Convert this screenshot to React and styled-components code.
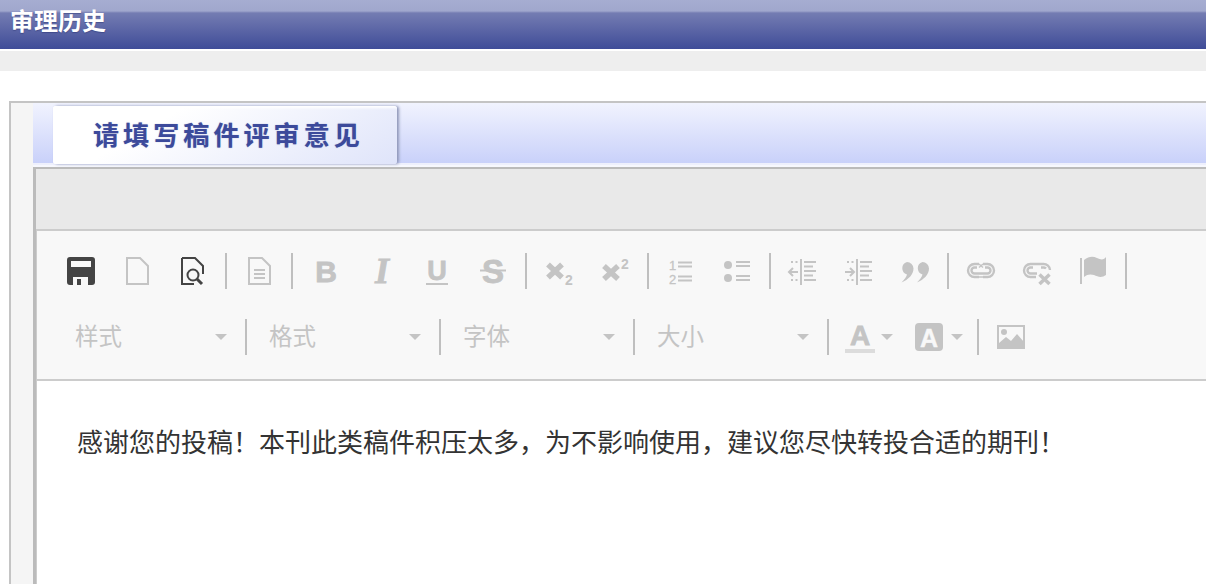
import styled, { createGlobalStyle } from 'styled-components'

const OFF = '#c4c4c4'
const ON = '#444'
const CJK = `"Noto Sans CJK SC", "Noto Sans", sans-serif`
const MESSAGE = '感谢您的投稿\uFF01本刊此类稿件积压太多\uFF0C为不影响使用\uFF0C建议您尽快转投合适的期刊\uFF01'

const GlobalStyle = createGlobalStyle`
  html, body {
    margin: 0;
    background: #fff;
    overflow: hidden;
  }
  body {
    font-family: ${CJK};
  }
`

const Page = styled.div`
  height: 584px;
  overflow: hidden;
`

const HistoryBar = styled.div`
  height: 49px;
  padding-left: 10px;
  box-sizing: border-box;
  background: linear-gradient(#a6add1 0, #a0a7cd 11px, #747cb2 13px, #3f4c98 100%);
  color: #fff;
  font-size: 24px;
  font-weight: 700;
  line-height: 40px;
  text-shadow: 0 1px 1px rgba(30, 40, 100, 0.4);
`

const GreyBand = styled.div`
  height: 20px;
  margin-top: 2px;
  background: #eee;
`

const Panel = styled.div`
  display: flex;
  margin: 30px 0 0 9px;
  height: 483px;
  border-top: 2px solid #c4c4c4;
  border-left: 2px solid #c4c4c4;
`

const SideStrip = styled.div`
  flex: 0 0 22px;
  background: #f5f5f5;
`

const Main = styled.div`
  flex: 1;
  min-width: 0;
  display: flex;
  flex-direction: column;
`

const TabBar = styled.div`
  height: 57px;
  padding-top: 3px;
  padding-left: 20px;
  background: linear-gradient(#f1f3fe, #c9d1fa);
  box-shadow: 0 2px 0 #eef0fd, 0 4px 0 #f7f8fe;
`

const Tab = styled.div`
  width: 344px;
  height: 58px;
  box-sizing: border-box;
  border-radius: 3px;
  background: linear-gradient(150deg, #ffffff 30%, #dfe4fa 100%);
  box-shadow: 2px 0 3px #8e96b8, inset 2px 2px 3px #fff;
  color: #3c4a9b;
  font-size: 26px;
  font-weight: 700;
  letter-spacing: 4.1px;
  line-height: 56px;
  padding-left: 40px;
  white-space: nowrap;
  text-shadow: 0 0 1px rgba(60, 74, 155, 0.5);
`

const EditorFrame = styled.div`
  flex: 1;
  margin-top: 4px;
  display: flex;
  flex-direction: column;
  border-top: 2px solid #bbb;
  border-left: 3px solid #bbb;
`

const EditorTop = styled.div`
  height: 60px;
  background: #e9e9e9;
`

const EditorBody = styled.div`
  flex: 1;
  border-left: 1px solid #ccc;
  border-top: 2px solid #ccc;
`

const Toolbar = styled.div`
  height: 150px;
  box-sizing: border-box;
  padding: 22px 0 0 16px;
  background: #f8f8f8;
  border-bottom: 2px solid #ccc;
`

const ToolRow = styled.div`
  display: flex;
  align-items: center;
  height: 36px;
  margin-bottom: 30px;
`

const ToolButton = styled.div`
  flex: 0 0 ${({ $w }) => $w || 56}px;
  height: 36px;
  display: flex;
  align-items: center;
  justify-content: center;
  gap: ${({ $gap }) => $gap || 0}px;
`

const Sep = styled.div`
  flex: 0 0 2px;
  height: 36px;
  margin: 0 ${({ $m }) => ($m === undefined ? 4 : $m)}px;
  background: #bfbfbf;
`

const Combo = styled.div`
  flex: 0 0 192px;
  box-sizing: border-box;
  display: flex;
  align-items: center;
  justify-content: space-between;
  padding: 0 18px 0 22px;
  color: #c4c4c4;
  font-size: 23.5px;
`

const ComboLabel = styled.span`
  line-height: 32px;
  padding-bottom: 4px;
`

const Caret = styled.span`
  width: 0;
  height: 0;
  border-left: 6px solid transparent;
  border-right: 6px solid transparent;
  border-top: 6px solid ${OFF};
`

const Content = styled.div`
  background: #fff;
  padding: 40px 0 0 40px;
  color: #333;
  font-size: 26px;
  line-height: 40px;
  white-space: nowrap;
`

const Icon = ({ children, w = 28, color = OFF }) => (
  <svg width={w} height={28} viewBox={`0 0 ${w} 28`} fill='none' stroke={color} strokeWidth='2' style={{ display: 'block', overflow: 'visible' }}>
    {children}
  </svg>
)

const Letter = ({ x = 14, y = 24, size = 30, weight = 700, style, font = 'Liberation Sans', color = OFF, thick = 0.8, children }) => (
  <text x={x} y={y} textAnchor='middle' fontFamily={font} fontSize={size} fontWeight={weight} fontStyle={style} fill={color} stroke={color} strokeWidth={thick}>
    {children}
  </text>
)

const SaveIcon = () => (
  <Icon color={ON}>
    <path stroke='none' fill={ON} fillRule='evenodd' d='M3 0H25a3 3 0 0 1 3 3V25a3 3 0 0 1-3 3H3a3 3 0 0 1-3-3V3a3 3 0 0 1 3-3ZM4 4V10H24V4ZM6 20V28H10V22H14V28H21V20Z' />
  </Icon>
)

const PageIcon = () => (
  <Icon>
    <path d='M4 1H17L25 9V27H4Z' />
  </Icon>
)

const PreviewIcon = () => (
  <Icon color={ON}>
    <path d='M3 1H16L24 9V17M15 27H3V1' />
    <circle cx='14' cy='18' r='5.5' />
    <path strokeWidth='3' d='M18 22L23 27' />
  </Icon>
)

const TemplateIcon = () => (
  <Icon>
    <path d='M4 1H17L25 9V27H4Z' />
    <path d='M9 13H20M9 17H20M9 21H20' />
  </Icon>
)

const BoldIcon = () => <Icon><Letter x={15} size={30} y={25}>B</Letter></Icon>
const ItalicIcon = () => <Icon><Letter x={15} size={36} y={26} font='Liberation Serif' style='italic'>I</Letter></Icon>
const UnderlineIcon = () => (
  <Icon>
    <Letter size={27} y={23}>U</Letter>
    <path d='M3 27H25' />
  </Icon>
)
const StrikeIcon = () => (
  <Icon>
    <Letter size={33} y={26}>S</Letter>
    <path d='M1 13.5H27' />
  </Icon>
)

const SubIcon = () => (
  <Icon>
    <path strokeWidth='5.5' d='M3 7.500L17 20.500M17 7.500L3 20.500' />
    <Letter x={24} y={28} size={14} thick={0}>2</Letter>
  </Icon>
)
const SupIcon = () => (
  <Icon>
    <path strokeWidth='5.5' d='M3 9L17 22M17 9L3 22' />
    <Letter x={24} y={12} size={14} thick={0}>2</Letter>
  </Icon>
)

const NumberListIcon = () => (
  <Icon>
    <Letter x={5.5} y={13} size={13} weight={400} thick={0.3}>1</Letter>
    <Letter x={5.5} y={27} size={13} weight={400} thick={0.3}>2</Letter>
    <path d='M11 5.500H25M11 9.500H25M11 19.500H25M11 23.500H25' />
  </Icon>
)

const BulletListIcon = () => (
  <Icon>
    <circle cx='5' cy='8' r='4' fill={OFF} stroke='none' />
    <circle cx='5' cy='21' r='4' fill={OFF} stroke='none' />
    <path d='M13 5H27M13 9H27M13 19H27M13 23H27' />
  </Icon>
)

const IndentLines = () => (
  <>
    <path d='M12 2V28' />
    <path d='M15 5H27M15 9.500H24M15 14H27M15 18.500H24M15 23H27' />
    <path d='M2 5H9M2 23H9' strokeWidth='2' strokeDasharray='2 2.5' />
  </>
)

const OutdentIcon = () => (
  <Icon>
    <IndentLines />
    <path d='M9 15H0M4 11L0 15L4 19' />
  </Icon>
)

const IndentIcon = () => (
  <Icon>
    <IndentLines />
    <path d='M0 15H9M5 11L9 15L5 19' />
  </Icon>
)

const QuoteIcon = () => (
  <Icon w={30}>
    <path stroke='none' fill={OFF} d='M7 5a6.500 6.500 0 0 1 6.500 6.500c0 6-5 11-12 14c3-3 5-6 5.500-8a6.500 6.500 0 0 1 0-12.500ZM22.500 5a6.500 6.500 0 0 1 6.500 6.500c0 6-5 11-12 14c3-3 5-6 5.500-8a6.500 6.500 0 0 1 0-12.500Z' />
  </Icon>
)

const LinkIcon = () => (
  <Icon>
    <path strokeWidth='2.4' d='M12 7H7.500a6.500 6.500 0 0 0 0 13H12M16 7H20.500a6.500 6.500 0 0 1 0 13H16' />
    <path strokeWidth='2.4' d='M10 10.500H7.500a3 3 0 0 0 0 6H20.500a3 3 0 0 0 0-6H18' />
    <path strokeWidth='1.5' d='M12 7L16 10.500M16 7L12 10.500M12 20H16' />
  </Icon>
)

const UnlinkIcon = () => (
  <Icon>
    <path strokeWidth='2.4' d='M13 20H7.500a6.500 6.500 0 0 1 0-13H20.500a6.500 6.500 0 0 1 6.500 6' />
    <path strokeWidth='2.4' d='M10 10.500H7.500a3 3 0 0 0 0 6H14M18 10.500H21a3 3 0 0 1 2 1' />
    <path strokeWidth='3.5' d='M16.500 17.500L26.500 27M26.500 17.500L16.500 27' />
  </Icon>
)

const FlagIcon = () => (
  <Icon>
    <path d='M2 1V27' />
    <path stroke='none' fill={OFF} d='M5 3C10 -1 14 -1 18 1C22 3 25 3 27 0V18C23 21 19 20 15 18C12 17 8 17 5 20Z' />
  </Icon>
)

const TextColorIcon = () => (
  <Icon w={30}>
    <Letter x={15} y={22} size={28}>A</Letter>
    <path strokeWidth='4' d='M0 28H30' stroke='#dcdcdc' />
  </Icon>
)

const BgColorIcon = () => (
  <Icon>
    <rect width='28' height='28' rx='4' fill={OFF} stroke='none' />
    <Letter y={24} size={25} color='#f8f8f8' thick={0.4}>A</Letter>
  </Icon>
)

const ImageIcon = () => (
  <Icon>
    <path d='M1 3H27V25H1Z' />
    <circle cx='7' cy='9' r='3' fill={OFF} stroke='none' />
    <path stroke='none' fill={OFF} d='M2 24V20L9 14L14 18L20 11L27 19V24Z' />
  </Icon>
)

const ToolGroups = [
  [SaveIcon, PageIcon, PreviewIcon],
  [TemplateIcon],
  [BoldIcon, ItalicIcon, UnderlineIcon, StrikeIcon],
  [SubIcon, SupIcon],
  [NumberListIcon, BulletListIcon],
  [OutdentIcon, IndentIcon, QuoteIcon],
  [LinkIcon, UnlinkIcon, FlagIcon],
]

const FirstRow = () => (
  <ToolRow>
    {ToolGroups.map((group, i) => (
      <div key={i} style={{ display: 'contents' }}>
        {group.map((Glyph, j) => (
          <ToolButton key={j}><Glyph /></ToolButton>
        ))}
        <Sep />
      </div>
    ))}
  </ToolRow>
)

const SecondRow = () => (
  <ToolRow>
    {['样式', '格式', '字体', '大小'].map(label => (
      <div key={label} style={{ display: 'contents' }}>
        <Combo><ComboLabel>{label}</ComboLabel><Caret /></Combo>
        <Sep $m={0} />
      </div>
    ))}
    <ToolButton $w={79} $gap={6}><TextColorIcon /><Caret /></ToolButton>
    <ToolButton $w={62} $gap={8}><BgColorIcon /><Caret /></ToolButton>
    <Sep $m={7} />
    <ToolButton $w={50}><ImageIcon /></ToolButton>
  </ToolRow>
)

export default function App() {
  return (
    <Page>
      <GlobalStyle />
      <HistoryBar>审理历史</HistoryBar>
      <GreyBand />
      <Panel>
        <SideStrip />
        <Main>
          <TabBar>
            <Tab>请填写稿件评审意见</Tab>
          </TabBar>
          <EditorFrame>
            <EditorTop />
            <EditorBody>
              <Toolbar>
                <FirstRow />
                <SecondRow />
              </Toolbar>
              <Content>{MESSAGE}</Content>
            </EditorBody>
          </EditorFrame>
        </Main>
      </Panel>
    </Page>
  )
}
